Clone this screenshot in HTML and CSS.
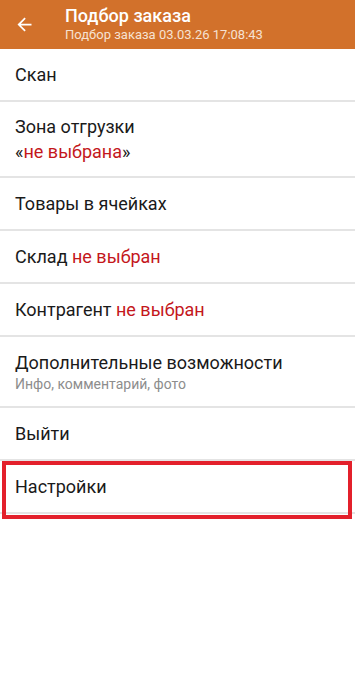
FILE: index.html
```
<!DOCTYPE html>
<html lang="ru">
<head>
<meta charset="utf-8">
<link rel="stylesheet" href="styles.css">
</head>
<body>
<div class="header">
  <div class="back">
    <svg width="21" height="21" viewBox="0 0 24 24"><path d="M20 11H7.83l5.59-5.59L12 4l-8 8 8 8 1.41-1.41L7.83 13H20v-2z" fill="#fff"/></svg>
  </div>
  <div class="titles">
    <div class="title">Подбор заказа</div>
    <div class="subtitle">Подбор заказа 03.03.26 17:08:43</div>
  </div>
</div>
<div class="list">
  <div class="row">Скан</div>
  <div class="row two">
    <div>Зона отгрузки</div>
    <div>«<span class="red">не выбрана</span>»</div>
  </div>
  <div class="row">Товары в ячейках</div>
  <div class="row">Склад <span class="red">не выбран</span></div>
  <div class="row">Контрагент <span class="red">не выбран</span></div>
  <div class="row two extra">
    <div>Дополнительные возможности</div>
    <div class="hint">Инфо, комментарий, фото</div>
  </div>
  <div class="row">Выйти</div>
  <div class="wrap">
    <div class="row">Настройки</div>
    <div class="frame"></div>
  </div>
</div>
</body>
</html>
```
FILE: styles.css
```
html, body {
  margin: 0;
  background: #fff;
}
body {
  font-family: Roboto, "Noto Sans", sans-serif;
  width: 355px;
  min-height: 676px;
}
.header {
  height: 49px;
  background: #d2712b;
  display: flex;
  align-items: center;
  color: #fff;
}
.back {
  width: 65px;
  display: flex;
  align-items: center;
  padding-left: 14px;
  box-sizing: border-box;
}
.back svg { display: block; }
.titles { display: flex; flex-direction: column; }
.title {
  font-size: 18px;
  font-weight: 500;
  line-height: 22px;
  margin-top: -2px;
}
.subtitle {
  font-size: 13px;
  line-height: 16px;
  color: #f6e2d2;
}
.row {
  height: 51px;
  border-bottom: 2px solid #e4e4e4;
  display: flex;
  align-items: center;
  padding-left: 15px;
  font-size: 18px;
  color: #1a1a1a;
  white-space: pre;
}
.row.two {
  flex-direction: column;
  align-items: flex-start;
  justify-content: center;
  height: 74px;
  line-height: 25px;
}
.row.two.extra {
  height: 69px;
  line-height: 24px;
}
.red { color: #c4171c; }
.hint {
  font-size: 14px;
  color: #8d8d8d;
  line-height: 18px;
}
.wrap {
  position: relative;
  padding-bottom: 8px;
}
.frame {
  position: absolute;
  left: 2px;
  width: 342px;
  top: 0;
  height: 50px;
  border: 4px solid #e3202b;
}
```
